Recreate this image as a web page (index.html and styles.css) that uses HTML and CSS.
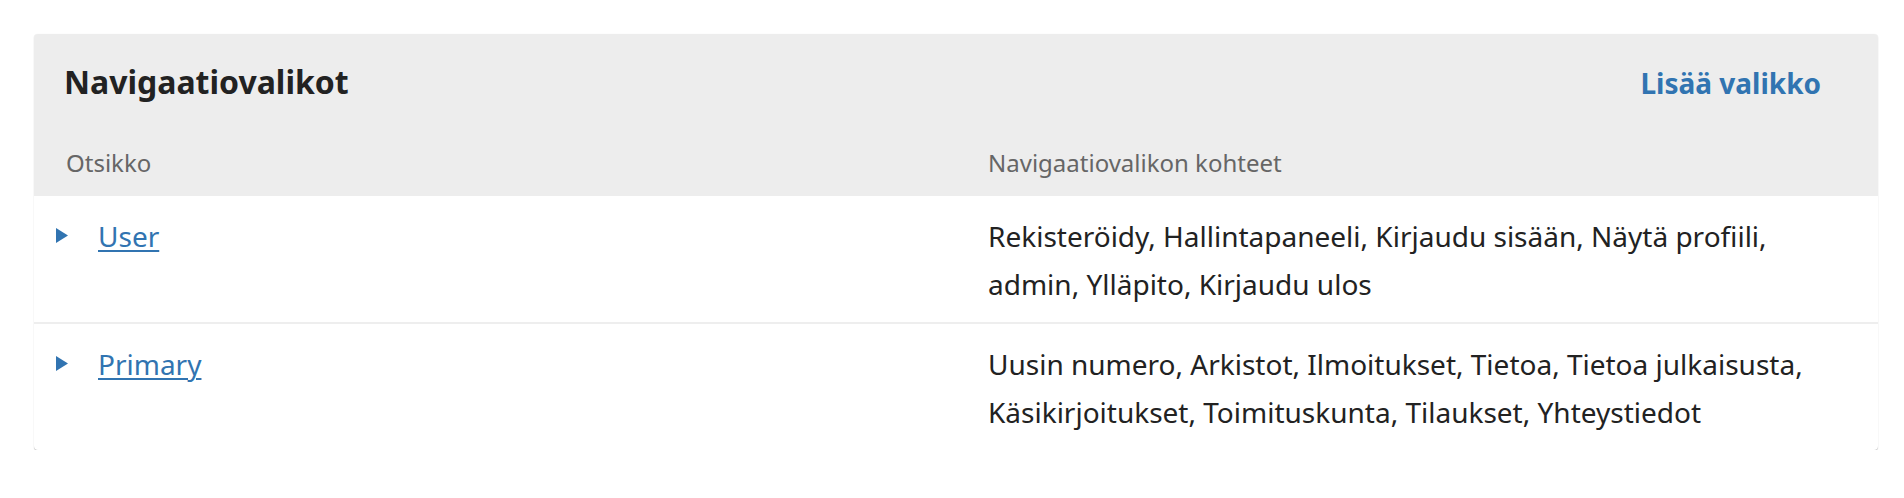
FILE: index.html
```html
<!DOCTYPE html>
<html lang="fi">
<head>
<meta charset="utf-8">
<title>Navigaatiovalikot</title>
<link rel="stylesheet" href="styles.css">
</head>
<body>
<div class="page">
  <section class="panel">
    <header class="panel-head">
      <h2 class="panel-title">Navigaatiovalikot</h2>
      <a class="panel-action" href="#">Lisää valikko</a>
    </header>
    <div class="grid">
      <div class="cell head">Otsikko</div>
      <div class="cell head">Navigaatiovalikon kohteet</div>

      <div class="cell name">
        <svg class="caret" width="12" height="15" viewBox="0 0 12 15"><path d="M0 0 L12 7.5 L0 15 Z"/></svg>
        <a href="#">User</a>
      </div>
      <div class="cell items">Rekisteröidy, Hallintapaneeli, Kirjaudu sisään, Näytä profiili, admin, Ylläpito, Kirjaudu ulos</div>

      <div class="cell name sep">
        <svg class="caret" width="12" height="15" viewBox="0 0 12 15"><path d="M0 0 L12 7.5 L0 15 Z"/></svg>
        <a href="#">Primary</a>
      </div>
      <div class="cell items sep">Uusin numero, Arkistot, Ilmoitukset, Tietoa, Tietoa julkaisusta, Käsikirjoitukset, Toimituskunta, Tilaukset, Yhteystiedot</div>
    </div>
  </section>
</div>
</body>
</html>
```

FILE: styles.css
```css
html, body {
  margin: 0;
  padding: 0;
  background: #fff;
}

body {
  font-family: "Noto Sans", "Open Sans", sans-serif;
  color: #222;
}

.page {
  padding: 34px 26px 0 34px;
}

.panel {
  background: #fff;
  border-radius: 4px;
  box-shadow: 0 1px 1px rgba(0, 0, 0, 0.22), 0 0 1px rgba(0, 0, 0, 0.1);
  overflow: hidden;
}

.panel-head {
  display: flex;
  align-items: baseline;
  justify-content: space-between;
  background: #ededed;
  padding: 28px 32px 28px 30px;
}

.panel-title {
  margin: 0;
  font-size: 32px;
  line-height: 40px;
  font-weight: 700;
  color: #222;
}

.panel-action {
  font-size: 28px;
  line-height: 40px;
  font-weight: 700;
  color: #3174b1;
  text-decoration: none;
  padding-right: 25px;
}

.grid {
  display: grid;
  grid-template-columns: 1fr 1fr;
}

.cell {
  padding: 16px 32px 14px;
  font-size: 28px;
  line-height: 48px;
}

.cell.head {
  background: #ededed;
  color: #666;
  font-size: 24px;
  line-height: 32px;
  padding: 16px 32px 17px;
}

.cell.sep {
  border-top: 2px solid #eeeeee;
}

.cell.name {
  display: flex;
  align-items: flex-start;
  padding-left: 22px;
}

.caret {
  fill: #3174b1;
  flex: none;
  margin-right: 30px;
  margin-top: 16px;
}

.cell.name a {
  color: #3174b1;
  text-decoration: underline;
  text-underline-offset: 3px;
  text-decoration-thickness: 2px;
}
```
